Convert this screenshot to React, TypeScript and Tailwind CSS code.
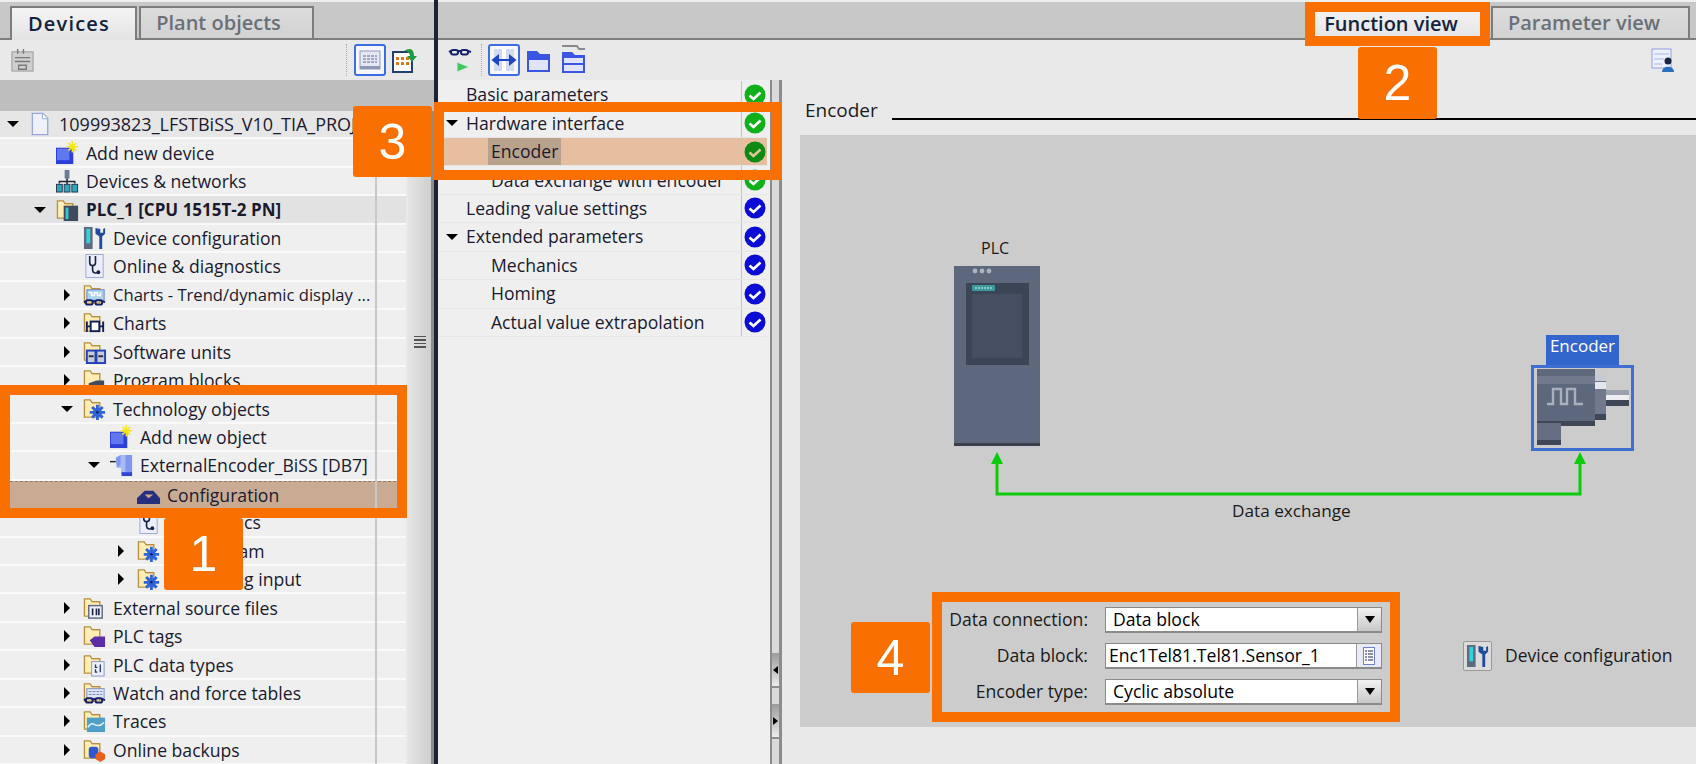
import React from 'react';

const FONT = "font-['Open_Sans','Liberation_Sans',sans-serif]";

type IconName =
  | 'file' | 'addDevice' | 'network' | 'plc' | 'devConfig' | 'diag' | 'chartsTrend' | 'charts'
  | 'units' | 'blocks' | 'tech' | 'encoder' | 'config' | 'source' | 'tags' | 'types' | 'watch'
  | 'traces' | 'backups';

// folder drawn behind most of the tree icons
const Folder = () => (
  <>
    <path d="M1.5 21V3h6l2 3h8v15z" fill="#fff1c0" stroke="#b98f3e" strokeWidth="1.4" />
    <path d="M3 7h13v13H3z" fill="#ffe9a8" opacity="0.6" />
  </>
);

const Star = ({ x, y }: { x: number; y: number }) => (
  <g stroke="#f5e611" strokeWidth="1.6" transform={`translate(${x} ${y})`}>
    <path d="M0 -6V6M-6 0H6M-4 -4L4 4M-4 4L4 -4" />
  </g>
);

const Gear = ({ x, y }: { x: number; y: number }) => (
  <g transform={`translate(${x} ${y})`}>
    <path d="M0 -8V8M-8 0H8M-5.5 -5.5L5.5 5.5M-5.5 5.5L5.5 -5.5" stroke="#2f63d8" strokeWidth="3" />
    <circle r="4.5" fill="#2f63d8" />
    <circle r="1.3" fill="#10205c" />
  </g>
);

const Glasses = ({ y = 18 }: { y?: number }) => (
  <g fill="none" stroke="#14206a" strokeWidth="2">
    <rect x="3" y={y} width="7" height="4.5" rx="2" />
    <rect x="13" y={y} width="7" height="4.5" rx="2" />
    <path d={`M10 ${y + 1}h3M20 ${y + 1}l3 1M3 ${y + 1}l-2 1`} />
  </g>
);

const TreeIcon = ({ name }: { name: IconName }) => {
  let inner: React.ReactNode = null;
  if (name === 'file') {
    inner = (
      <>
        <path d="M3.5 1.5h11l5 5v17h-16z" fill="#eef1fb" stroke="#9aa8dc" strokeWidth="1.4" />
        <path d="M14 1.5v5.5h5.5" fill="#fff" stroke="#9aa8dc" />
      </>
    );
  } else if (name === 'addDevice') {
    inner = (
      <>
        <path d="M0 7h18v17H0z" fill="#2c3fd6" />
        <path d="M1 8h13v12H1z" fill="#5f78f0" />
        <Star x={17} y={6} />
      </>
    );
  } else if (name === 'network') {
    inner = (
      <>
        <rect x="9" y="1" width="5" height="9" fill="#6b7c99" />
        <path d="M11.5 10v5M3.5 15v-2h16v2M11.5 13v3" stroke="#1c2433" strokeWidth="1.6" fill="none" />
        <rect x="0.5" y="16" width="6" height="8" fill="#2ea7b8" stroke="#25374f" />
        <rect x="8.5" y="16" width="6" height="8" fill="#2ea7b8" stroke="#25374f" />
        <rect x="16.5" y="16" width="6" height="8" fill="#2ea7b8" stroke="#25374f" />
      </>
    );
  } else if (name === 'plc') {
    inner = (
      <>
        <Folder />
        <rect x="8" y="8" width="15" height="16" fill="#3f4a5c" />
        <rect x="10" y="10" width="3" height="12" fill="#35c8cf" />
      </>
    );
  } else if (name === 'devConfig') {
    inner = (
      <>
        <rect x="1" y="1" width="9" height="23" fill="#5f6b7e" />
        <rect x="3.5" y="3" width="4" height="15" fill="#2fd4dc" />
        <path d="M13 2v6l4 3v13h3V11l3-3V2l-2 1v4h-3V3z" fill="#1f4d9a" />
      </>
    );
  } else if (name === 'diag') {
    inner = (
      <>
        <rect x="3" y="0.5" width="18" height="24" fill="#eceffb" stroke="#9aa8dc" />
        <path d="M7 2v7a3 3 0 0 0 6 0V2M10 12v5a3 3 0 0 0 5 2" fill="none" stroke="#1a2444" strokeWidth="1.7" />
        <circle cx="16" cy="19" r="2" fill="#1a2444" />
      </>
    );
  } else if (name === 'chartsTrend') {
    inner = (
      <>
        <Folder />
        <rect x="4" y="7" width="18" height="11" fill="#aad4ee" stroke="#6b7fc0" />
        <path d="M6 10h3v3h3v-3h3v3h3v-3" fill="none" stroke="#fff" strokeWidth="1.5" />
        <Glasses y={18} />
      </>
    );
  } else if (name === 'charts') {
    inner = (
      <>
        <Folder />
        <path d="M4 11v11M21 11v11M4 16h4M17 16h4" stroke="#10205c" strokeWidth="2" />
        <rect x="8" y="11" width="9" height="10" fill="#fff" stroke="#10205c" strokeWidth="2" />
      </>
    );
  } else if (name === 'units') {
    inner = (
      <>
        <Folder />
        <rect x="4" y="11" width="9" height="13" fill="#c7cdd6" stroke="#2340b8" strokeWidth="2" />
        <rect x="14" y="11" width="9" height="13" fill="#c7cdd6" stroke="#2340b8" strokeWidth="2" />
        <path d="M6 17h5M16 17h5" stroke="#333" strokeWidth="2" />
      </>
    );
  } else if (name === 'blocks') {
    inner = (
      <>
        <Folder />
        <path d="M6 16l8-3h8v7H6z" fill="#3f4a5c" />
      </>
    );
  } else if (name === 'tech') {
    inner = (
      <>
        <Folder />
        <Gear x={15} y={16} />
      </>
    );
  } else if (name === 'encoder') {
    inner = (
      <>
        <path d="M0 9h6" stroke="#222" strokeWidth="1.5" />
        <path d="M6 5l5-3h12v20H12v-7H7z" fill="#7f97ee" />
        <path d="M11 2h5v20h-4v-7H8l3-3z" fill="#a9bbf6" />
        <path d="M12 20h11v4H12z" fill="#2c47d0" />
      </>
    );
  } else if (name === 'config') {
    inner = (
      <path d="M0 22v-6L8 8h9l7 8v6zM8 12l4 4 5-4z" fill="#24307c" fillRule="evenodd" />
    );
  } else if (name === 'source') {
    inner = (
      <>
        <Folder />
        <rect x="6" y="10" width="14" height="13" fill="#eef0f5" stroke="#5d6a80" strokeWidth="1.5" />
        <path d="M10 13v7M14 13v7M16.5 13v7" stroke="#1a2444" strokeWidth="1.7" />
      </>
    );
  } else if (name === 'tags') {
    inner = (
      <>
        <Folder />
        <path d="M7 17l5-4h11v11H12z" fill="#5b2ea8" />
      </>
    );
  } else if (name === 'types') {
    inner = (
      <>
        <Folder />
        <rect x="9" y="9" width="13" height="15" fill="#eef1fb" stroke="#8a97c8" />
        <path d="M13 12v3h2M13 17v3h2M18 12v8" stroke="#26366e" strokeWidth="1.4" fill="none" />
      </>
    );
  } else if (name === 'watch') {
    inner = (
      <>
        <Folder />
        <rect x="4" y="8" width="18" height="10" fill="#dfe6f6" stroke="#7f8fc4" />
        <path d="M6 11h14M6 14h14" stroke="#6f82b8" strokeDasharray="3 1" />
        <Glasses y={18} />
      </>
    );
  } else if (name === 'traces') {
    inner = (
      <>
        <Folder />
        <rect x="4" y="9" width="19" height="15" fill="#4f9fc8" />
        <path d="M5 19c4-6 6-3 9-2s5 0 8-3" stroke="#e4f2fa" strokeWidth="1.6" fill="none" />
      </>
    );
  } else if (name === 'backups') {
    inner = (
      <>
        <Folder />
        <rect x="6" y="9" width="10" height="12" rx="3" fill="#2f58d0" />
        <path d="M18 14l5 3v5l-5 3-5-3v-5z" fill="#e95f1c" />
      </>
    );
  }
  return (
    <svg viewBox="0 0 25 25" className="h-[24px] w-[24px] shrink-0">
      {inner}
    </svg>
  );
};

const Caret = ({ dir }: { dir?: 'down' | 'right' }) => {
  if (dir === 'down') {
    return <span className="h-0 w-0 border-x-[6px] border-t-[6px] border-x-transparent border-t-black" />;
  }
  if (dir === 'right') {
    return <span className="h-0 w-0 border-y-[6px] border-l-[6px] border-y-transparent border-l-black" />;
  }
  return null;
};

type Row = { level: 0 | 1 | 2 | 3 | 4; label: string; icon: IconName; caret?: 'down' | 'right'; kind?: string };

const TREE: Row[] = [
  { level: 0, label: '109993823_LFSTBiSS_V10_TIA_PROJ', icon: 'file', caret: 'down', kind: 'project' },
  { level: 1, label: 'Add new device', icon: 'addDevice' },
  { level: 1, label: 'Devices & networks', icon: 'network' },
  { level: 1, label: 'PLC_1 [CPU 1515T-2 PN]', icon: 'plc', caret: 'down', kind: 'plc' },
  { level: 2, label: 'Device configuration', icon: 'devConfig' },
  { level: 2, label: 'Online & diagnostics', icon: 'diag' },
  { level: 2, label: 'Charts - Trend/dynamic display ...', icon: 'chartsTrend', caret: 'right', kind: 'tight' },
  { level: 2, label: 'Charts', icon: 'charts', caret: 'right' },
  { level: 2, label: 'Software units', icon: 'units', caret: 'right' },
  { level: 2, label: 'Program blocks', icon: 'blocks', caret: 'right' },
  { level: 2, label: 'Technology objects', icon: 'tech', caret: 'down' },
  { level: 3, label: 'Add new object', icon: 'addDevice' },
  { level: 3, label: 'ExternalEncoder_BiSS [DB7]', icon: 'encoder', caret: 'down' },
  { level: 4, label: 'Configuration', icon: 'config', kind: 'selected' },
  { level: 4, label: 'Diagnostics', icon: 'diag' },
  { level: 4, label: 'Output cam', icon: 'tech', caret: 'right' },
  { level: 4, label: 'Measuring input', icon: 'tech', caret: 'right' },
  { level: 2, label: 'External source files', icon: 'source', caret: 'right' },
  { level: 2, label: 'PLC tags', icon: 'tags', caret: 'right' },
  { level: 2, label: 'PLC data types', icon: 'types', caret: 'right' },
  { level: 2, label: 'Watch and force tables', icon: 'watch', caret: 'right' },
  { level: 2, label: 'Traces', icon: 'traces', caret: 'right' },
  { level: 2, label: 'Online backups', icon: 'backups', caret: 'right' },
];

const INDENT = ['pl-[1px]', 'pl-[28px]', 'pl-[55px]', 'pl-[82px]', 'pl-[109px]'];

const rowTextClass = (kind?: string) => {
  if (kind === 'plc') return 'text-[17px] font-bold';
  if (kind === 'tight') return 'text-[16.6px]';
  if (kind === 'project') return 'text-[18px]';
  return 'text-[17.6px]';
};

const TreeRow = ({ row }: { row: Row }) => {
  const bg =
    row.kind === 'selected'
      ? 'bg-[#c9ab94] border-y border-dashed border-[#8f7b6a]'
      : row.kind === 'plc'
        ? 'bg-[#e2e2e2] border-b-2 border-[#fafafa]'
        : row.kind === 'project'
          ? 'bg-[#e6e6e6] border-b-2 border-[#fafafa]'
          : 'bg-[#efefef] border-b-2 border-[#fafafa]';
  return (
    <div className={`flex h-[28.44px] w-[406px] shrink-0 items-center overflow-hidden ${bg}`}>
      <div className={`flex w-[375px] items-center ${INDENT[row.level]}`}>
        <span className="flex w-[24px] shrink-0 justify-center">
          <Caret dir={row.caret} />
        </span>
        <span className="ml-[4px] shrink-0">
          <TreeIcon name={row.icon} />
        </span>
        <span className={`ml-[6px] whitespace-nowrap leading-[24px] text-[#1a1a2e] ${rowTextClass(row.kind)}`}>
          {row.label}
        </span>
      </div>
    </div>
  );
};

type NavRow = { label: string; indent: 0 | 1; caret?: boolean; state: 'ok' | 'info'; selected?: boolean };

const NAV: NavRow[] = [
  { label: 'Basic parameters', indent: 0, state: 'ok' },
  { label: 'Hardware interface', indent: 0, caret: true, state: 'ok' },
  { label: 'Encoder', indent: 1, state: 'ok', selected: true },
  { label: 'Data exchange with encoder', indent: 1, state: 'ok' },
  { label: 'Leading value settings', indent: 0, state: 'info' },
  { label: 'Extended parameters', indent: 0, caret: true, state: 'info' },
  { label: 'Mechanics', indent: 1, state: 'info' },
  { label: 'Homing', indent: 1, state: 'info' },
  { label: 'Actual value extrapolation', indent: 1, state: 'info' },
];

const StatusDot = ({ state, dark }: { state: 'ok' | 'info'; dark?: boolean }) => (
  <svg viewBox="0 0 22 22" className="h-[22px] w-[22px]">
    <circle cx="11" cy="11" r="10.5" fill={state === 'info' ? '#0b0bd6' : dark ? '#0c8a12' : '#10b01a'} />
    <path d="M5.5 11.5l4 3.5 7-6.5" fill="none" stroke={dark ? '#d9c79a' : '#fff'} strokeWidth="2.6" />
  </svg>
);

const NavItem = ({ row }: { row: NavRow }) => {
  const textClass = row.selected
    ? 'ml-[28px] bg-[#b9a28c] px-[3px] py-[2px]'
    : row.indent
      ? 'ml-[31px]'
      : 'ml-[6px]';
  return (
    <div
      className={`flex h-[28.44px] items-center border-b border-[#e6e6e6] ${row.selected ? 'bg-[#e6bfa0]' : 'bg-[#efefef]'}`}
    >
      <div className="flex min-w-0 flex-1 items-center pl-[6px]">
        <span className="flex w-[16px] shrink-0 justify-center">{row.caret && <Caret dir="down" />}</span>
        <span className={`whitespace-nowrap text-[17.6px] leading-[23px] text-[#1a1a2e] ${textClass}`}>
          {row.label}
        </span>
      </div>
      <div className="flex h-full w-[26px] shrink-0 items-center justify-center border-l border-[#c4c4c4]">
        <StatusDot state={row.state} dark={row.selected} />
      </div>
    </div>
  );
};

const Tab = ({ label, active, className = '' }: { label: string; active?: boolean; className?: string }) => (
  <div
    className={`flex items-center justify-center border-2 border-[#7d7d7d] text-[20px] font-semibold leading-none ${
      active
        ? 'border-b-0 bg-gradient-to-b from-[#f4f4f4] to-[#e4e4e4] text-[#14233c]'
        : 'bg-gradient-to-b from-[#dcdcdc] to-[#d2d2d2] text-[#6a7078]'
    } ${className}`}
  >
    {label}
  </div>
);

const PressedButton = ({ children }: { children: React.ReactNode }) => (
  <div className="flex h-[32px] w-[32px] items-center justify-center rounded-[3px] border-2 border-[#3b6fe0] bg-[#f6f7fc]">
    {children}
  </div>
);

const Callout = ({ n, className }: { n: number; className: string }) => (
  <div
    className={`absolute flex items-center justify-center rounded-[3px] bg-[#f96f00] font-['Liberation_Sans',sans-serif] text-[50px] leading-none text-white ${className}`}
  >
    {n}
  </div>
);

const PlcDevice = () => (
  <svg viewBox="0 0 86 180" className="h-[180px] w-[86px]">
    <rect width="86" height="180" fill="#5e687c" />
    <rect y="177" width="86" height="3" fill="#3a3f4c" />
    <circle cx="21" cy="5" r="2.4" fill="#aeb4c0" />
    <circle cx="28" cy="5" r="2.4" fill="#aeb4c0" />
    <circle cx="35" cy="5" r="2.4" fill="#aeb4c0" />
    <rect x="12" y="17" width="63" height="82" fill="#3c4556" />
    <rect x="18" y="28" width="50" height="64" fill="#464f61" />
    <rect x="18" y="19" width="23" height="6" rx="1" fill="#3a9a9e" />
    <path d="M21 22h17" stroke="#d8f0f0" strokeDasharray="2 1" />
  </svg>
);

const EncoderDevice = () => (
  <svg viewBox="0 0 92 78" className="h-[78px] w-[92px]">
    <rect x="0" y="0" width="58" height="56" fill="#5e687c" />
    <rect x="0" y="7" width="58" height="8" fill="#717a8d" />
    <rect x="0" y="52" width="58" height="5" fill="#3f4656" />
    <rect x="0" y="54" width="24" height="22" fill="#666f82" />
    <rect x="0" y="71" width="24" height="5" fill="#3f4656" />
    <path d="M10 35h6V20h8v15h6V20h8v15h8" fill="none" stroke="#a9afbc" strokeWidth="2.4" />
    <rect x="58" y="6" width="11" height="45" fill="#717a8d" />
    <rect x="58" y="6" width="11" height="6" fill="#c3c9d5" />
    <rect x="58" y="13" width="11" height="7" fill="#e3e6ec" />
    <rect x="58" y="45" width="11" height="6" fill="#3f4656" />
    <rect x="69" y="21" width="23" height="5" fill="#9aa0ad" />
    <rect x="69" y="26" width="23" height="5" fill="#eceef2" />
    <rect x="69" y="31" width="23" height="6" fill="#3f4656" />
  </svg>
);

const ComboArrow = () => (
  <div className="flex w-[24px] shrink-0 items-center justify-center border-l border-[#9a9a9a] bg-gradient-to-b from-[#f2f2f2] to-[#c8c8c8]">
    <span className="h-0 w-0 border-x-[5px] border-t-[7px] border-x-transparent border-t-black" />
  </div>
);

const Field = ({ label, value, browse }: { label: string; value: string; browse?: boolean }) => (
  <div className="flex h-[26px] items-center">
    <span className="w-[146px] shrink-0 whitespace-nowrap pb-[2px] text-right text-[17.6px] leading-[24px] text-[#1a1a1a]">
      {label}
    </span>
    <div className="ml-[17px] flex h-full w-[277px] border border-b-2 border-[#8a8a8a] bg-white">
      <span className={`flex-1 self-center whitespace-nowrap pb-[2px] text-[17.6px] leading-[22px] text-black ${browse ? 'pl-[3px]' : 'pl-[7px]'}`}>
        {value}
      </span>
      {browse ? (
        <div className="flex w-[25px] shrink-0 items-center justify-center border-l border-[#9a9a9a] bg-[#e8ebf6]">
          <svg viewBox="0 0 12 18" className="h-[18px] w-[12px]">
            <rect x="0.5" y="0.5" width="11" height="17" fill="#fff" stroke="#6f82cc" />
            <path d="M2 4h2M5 4h5M2 7h2M5 7h5M2 10h2M5 10h5M2 13h2M5 13h5" stroke="#14206a" />
          </svg>
        </div>
      ) : (
        <ComboArrow />
      )}
    </div>
  </div>
);

export default function App() {
  return (
    <div className={`relative flex h-[764px] w-[1696px] overflow-hidden bg-[#e9e9e9] ${FONT}`}>
      {/* project tree */}
      <div className="flex w-[434px] shrink-0 flex-col">
        <div className="flex h-[40px] shrink-0 items-end gap-[2px] border-b-2 border-[#7d7d7d] bg-[#c8c8c8] pl-[10px] shadow-[inset_0_2px_0_#efefef]">
          <Tab label="Devices" active className="-mb-[2px] h-[34px] w-[127px] pr-[9px] tracking-[1.2px]" />
          <Tab label="Plant objects" className="-mb-[2px] h-[34px] w-[175px] pr-[16px]" />
        </div>
        <div className="flex h-[40px] shrink-0 items-center bg-[#e9e9e9] pl-[10px] pr-[16px]">
          <svg viewBox="0 0 26 26" className="h-[25px] w-[25px]">
            <rect x="2" y="4" width="22" height="20" fill="#cfcfcf" stroke="#9a9a9a" />
            <path d="M8 1v5M14 1v5M5 10h16M5 14h16M9 18h8v4H9z" stroke="#7a7a7a" strokeWidth="1.5" fill="none" />
          </svg>
          <div className="ml-auto flex items-center gap-[6px] border-l border-dotted border-[#aaa] pl-[7px]">
            <PressedButton>
              <svg viewBox="0 0 22 22" className="h-[22px] w-[22px]">
                <rect x="1" y="2" width="20" height="18" fill="#e4e7f4" stroke="#8d97b8" />
                <path d="M4 7h14M4 10h14M4 13h14" stroke="#5c6a98" strokeDasharray="3 1" />
                <rect x="1" y="17" width="20" height="3" fill="#8d97b8" />
              </svg>
            </PressedButton>
            <svg viewBox="0 0 26 26" className="h-[26px] w-[26px]">
              <rect x="1" y="5" width="19" height="20" fill="#fff" stroke="#24406e" strokeWidth="2" />
              <path d="M4 10h3v3H4zM9 10h3v3H9zM14 10h3v3h-3zM4 15h3v3H4zM9 15h3v3H9zM14 15h3v3h-3z" fill="#e07a10" />
              <path d="M12 4c6-4 10-2 10 5h3l-5 6-5-6h3c0-3-3-5-6-5z" fill="#1f9a3c" />
            </svg>
          </div>
        </div>
        <div className="h-[31px] shrink-0 bg-[#bebebe]" />
        <div className="flex flex-1 overflow-hidden">
          <div className="relative flex w-[406px] shrink-0 flex-col">
            {TREE.map((row) => (
              <TreeRow key={row.label} row={row} />
            ))}
            <div className="absolute bottom-0 left-[375px] top-0 w-[2px] bg-[#c8c8c8]" />
          </div>
          <div className="ml-[2px] flex flex-1 items-center justify-center border-r-[3px] border-[#8c8c8c] bg-gradient-to-r from-[#e4e4e4] to-[#cfcfcf]">
            <div className="mb-[192px] flex w-[12px] flex-col gap-[2px]">
              <span className="h-[1.5px] bg-[#555]" />
              <span className="h-[1.5px] bg-[#555]" />
              <span className="h-[1.5px] bg-[#555]" />
              <span className="h-[1.5px] bg-[#555]" />
            </div>
          </div>
        </div>
      </div>

      <div className="w-[4px] shrink-0 bg-[#1c2433]" />

      {/* editor */}
      <div className="flex min-w-0 flex-1 flex-col">
        <div className="flex h-[40px] shrink-0 items-end justify-end gap-[1px] border-b-2 border-[#7d7d7d] bg-[#c8c8c8] pr-[6px] shadow-[inset_0_2px_0_#efefef]">
          <Tab label="Function view" active className="-mb-[2px] h-[34px] w-[185px] pr-[13px]" />
          <Tab label="Parameter view" className="-mb-[2px] h-[34px] w-[199px] pr-[13px]" />
        </div>
        <div className="flex min-h-0 flex-1">
          {/* secondary navigation */}
          <div className="flex w-[344px] shrink-0 flex-col">
            <div className="flex h-[40px] shrink-0 items-center pl-[10px]">
              <svg viewBox="0 0 26 28" className="h-[28px] w-[26px]">
                <Glasses y={4} />
                <path d="M9 16l12 5-12 5z" fill="#3cc95a" stroke="#dfe6df" />
              </svg>
              <div className="ml-[7px] mr-[6px] h-[32px] border-l border-dotted border-[#aaa]" />
              <PressedButton>
                <svg viewBox="0 0 26 26" className="h-[26px] w-[26px]">
                  <rect x="3" y="2" width="20" height="22" fill="#d3daf4" />
                  <rect x="11" y="2" width="4" height="22" fill="#fff" />
                  <path d="M2 13h22M2 13l5-4v8zM24 13l-5-4v8z" stroke="#2146c4" strokeWidth="2" fill="#2146c4" />
                </svg>
              </PressedButton>
              <svg viewBox="0 0 25 26" className="ml-[6px] h-[26px] w-[25px]">
                <path d="M1 4h10l3 3h10v18H1z" fill="#3a56e0" />
                <path d="M3 13h19v10H3z" fill="#dfe4fa" />
              </svg>
              <svg viewBox="0 0 25 30" className="ml-[10px] h-[30px] w-[25px]">
                <path d="M1 1h15l2 3h6" fill="none" stroke="#8a8a8a" strokeWidth="2" />
                <path d="M1 7h10l3 3h10v18H1z" fill="#3a56e0" />
                <path d="M3 13h19v5H3zM3 20h19v6H3z" fill="#dfe4fa" />
              </svg>
            </div>
            <div className="flex min-h-0 flex-1">
              <div className="min-w-0 flex-1 bg-[#efefef] pt-[1px]">
                <div className="pr-[3px]">
                  {NAV.map((row) => (
                    <NavItem key={row.label} row={row} />
                  ))}
                </div>
              </div>
              <div className="flex w-[12px] shrink-0 flex-col border-l-2 border-r-[3px] border-[#8c8c8c] bg-[#dadada]">
                <div className="mt-[573px] flex h-[35px] items-center justify-center border-b-2 border-[#8c8c8c] bg-gradient-to-b from-[#9c9c9c] to-[#ececec]">
                  <span className="h-0 w-0 border-y-[4px] border-r-[5px] border-y-transparent border-r-black" />
                </div>
                <div className="mt-[16px] flex h-[35px] items-center justify-center border-b-2 border-[#8c8c8c] bg-gradient-to-b from-[#9c9c9c] to-[#ececec]">
                  <span className="h-0 w-0 border-y-[4px] border-l-[5px] border-y-transparent border-l-black" />
                </div>
              </div>
            </div>
          </div>

          {/* function view content */}
          <div className="flex min-w-0 flex-1 flex-col pl-[18px]">
            <div className="flex h-[40px] shrink-0 justify-end pr-[21px] pt-[8px]">
              <svg viewBox="0 0 24 24" className="h-[24px] w-[24px]">
                <rect x="1" y="1" width="19" height="19" fill="#eef1fb" stroke="#8ea0e0" />
                <path d="M3 6h15M3 11h10M3 16h8" stroke="#a8b6e6" />
                <circle cx="17" cy="13" r="3.5" fill="#1a2444" />
                <path d="M11 24c0-7 12-7 12 0z" fill="#2a6fc0" />
              </svg>
            </div>
            <div className="flex h-[55px] shrink-0 items-start pt-[17px]">
              <span className="pl-[5px] text-[19px] leading-[26px] text-[#1a1a1a]">Encoder</span>
              <div className="ml-[14px] mt-[21px] h-[2px] flex-1 bg-black" />
            </div>
            <div className="relative h-[592px] shrink-0 bg-[#cccccc]">
              <span className="absolute left-[181px] top-[103px] text-[16px] leading-[20px] text-[#1a1a1a]">PLC</span>
              <div className="absolute left-[154px] top-[131px]">
                <PlcDevice />
              </div>

              <div className="absolute left-[746px] top-[200px] flex h-[30px] w-[73px] items-center justify-center bg-[#3366cc] pb-[8px] text-[17px] leading-[20px] text-white">
                Encoder
              </div>
              <div className="absolute left-[731px] top-[230px] flex h-[86px] w-[103px] items-center justify-center border-[3px] border-[#3e6fd0] bg-[#cccccc]">
                <EncoderDevice />
              </div>

              {/* data connection between PLC and encoder */}
              <svg viewBox="0 0 600 48" className="absolute left-[186px] top-[316px] h-[48px] w-[600px]">
                <path d="M11 6V43H594V6" fill="none" stroke="#0ccb0c" strokeWidth="3" />
                <path d="M5 13l6-12 6 12zM588 13l6-12 6 12z" fill="#0ccb0c" />
              </svg>
              <span className="absolute left-[432px] top-[365px] whitespace-nowrap text-[17.2px] leading-[22px] text-[#1a1a1a]">
                Data exchange
              </span>

              <div className="absolute left-[142px] top-[467px] flex w-[449px] flex-col gap-[10px] pt-[5px]">
                <Field label="Data connection:" value="Data block" />
                <Field label="Data block:" value="Enc1Tel81.Tel81.Sensor_1" browse />
                <Field label="Encoder type:" value="Cyclic absolute" />
              </div>

              <div className="absolute left-[663px] top-[506px] flex items-center gap-[13px]">
                <span className="flex h-[30px] w-[29px] items-center justify-center rounded-[2px] border border-[#9a9a9a] bg-[#dcdcdc]">
                  <TreeIcon name="devConfig" />
                </span>
                <span className="whitespace-nowrap pb-[3px] text-[17.5px] leading-[24px] text-[#1a1a1a]">Device configuration</span>
              </div>
            </div>
          </div>
        </div>
      </div>

      {/* orange highlight frames from the manual */}
      <div className="pointer-events-none absolute left-0 top-[385px] h-[133px] w-[407px] border-[10px] border-[#f96f00]" />
      <div className="pointer-events-none absolute left-[1305px] top-[2px] h-[44px] w-[185px] border-[10px] border-[#f96f00]" />
      <div className="pointer-events-none absolute left-[434px] top-[102px] h-[78px] w-[347px] border-[10px] border-[#f96f00]" />
      <div className="pointer-events-none absolute left-[932px] top-[592px] h-[130px] w-[468px] border-[10px] border-[#f96f00]" />
      <Callout n={1} className="left-[164px] top-[518px] h-[72px] w-[79px]" />
      <Callout n={2} className="left-[1358px] top-[47px] h-[72px] w-[79px]" />
      <Callout n={3} className="left-[353px] top-[106px] h-[71px] w-[79px]" />
      <Callout n={4} className="left-[851px] top-[622px] h-[71px] w-[79px]" />
    </div>
  );
}
